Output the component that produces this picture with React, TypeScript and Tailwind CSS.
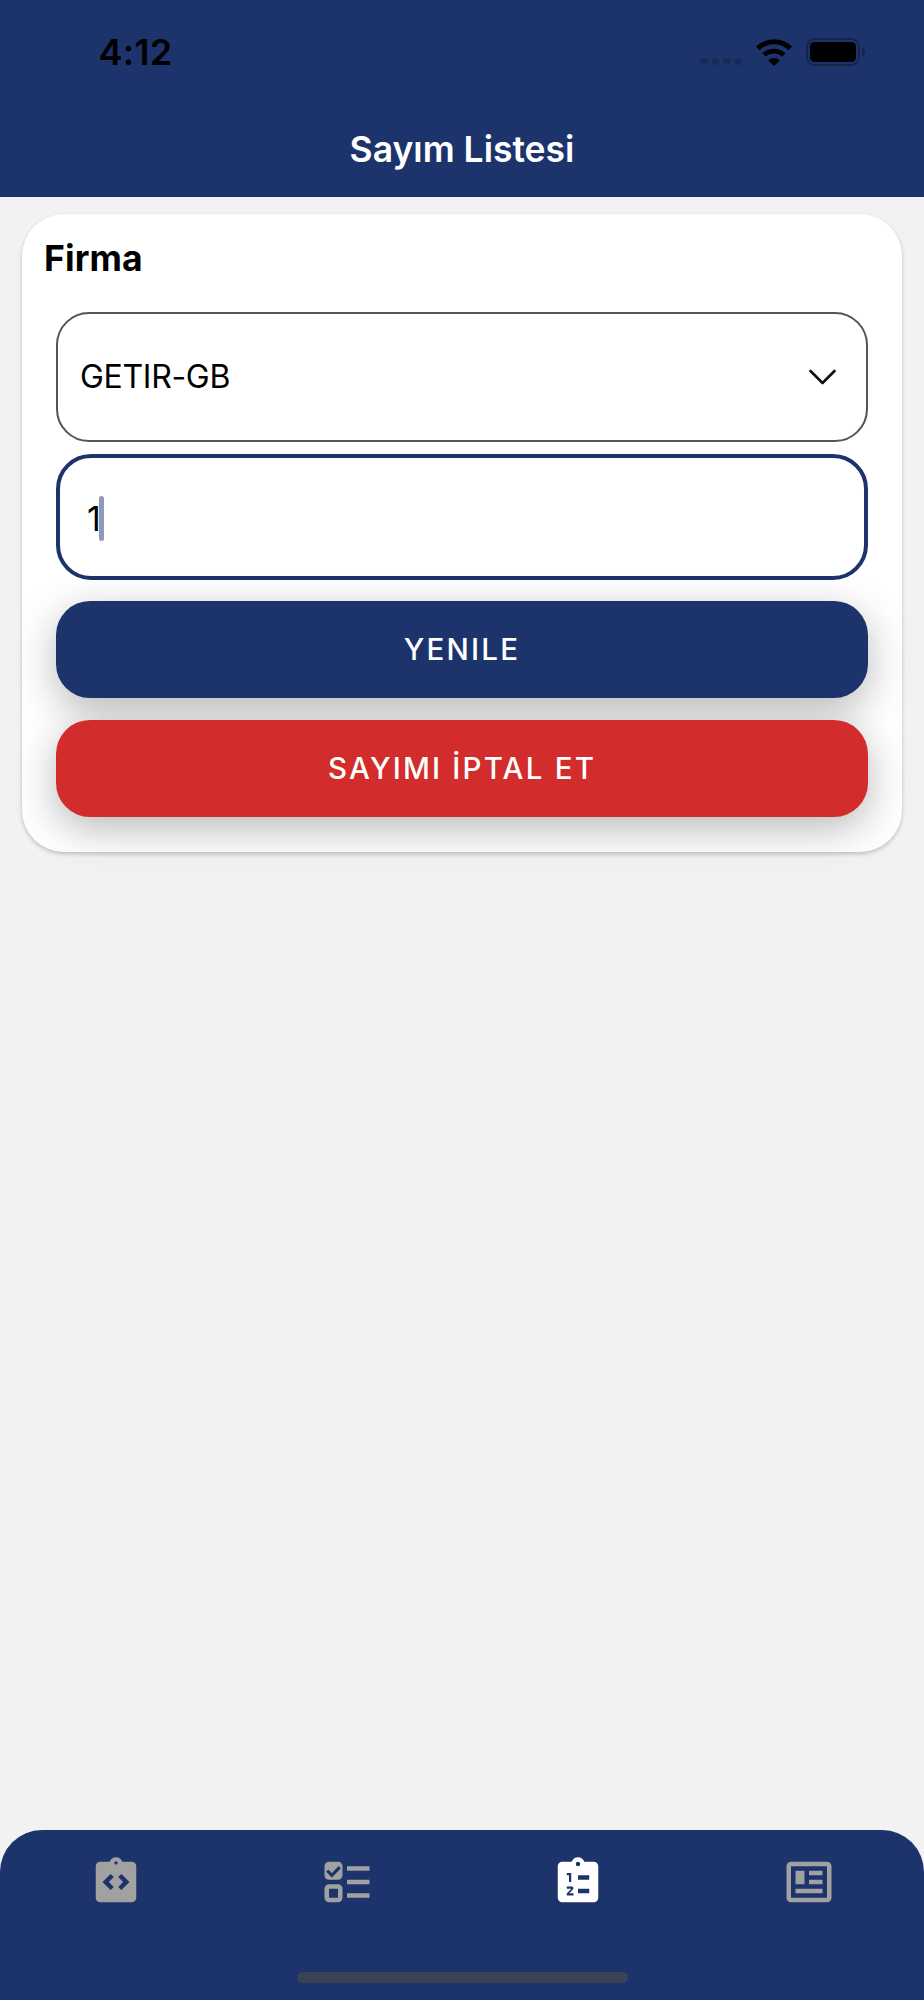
import type { ReactNode } from "react";

function StatusBar() {
  return (
    <div className="flex h-[104px] items-center justify-between pr-[59px] pl-[98.5px] text-black">
      <span className="text-[36px] leading-none font-semibold tracking-[0.2px]">4:12</span>
      <div className="flex items-center">
        <div className="mt-[19px] flex gap-[4px]">
          <span className="size-[7.5px] rounded-[3px] bg-[#172b57]" />
          <span className="size-[7.5px] rounded-[3px] bg-[#172b57]" />
          <span className="size-[7.5px] rounded-[3px] bg-[#172b57]" />
          <span className="size-[7.5px] rounded-[3px] bg-[#172b57]" />
        </div>
        <svg className="ml-[14px] h-[27px] w-[36px]" viewBox="0 0 36 27">
          <path d="M1.8 9.4a23.2 23.2 0 0 1 32.4 0" fill="none" stroke="currentColor" strokeWidth="5" />
          <path d="M8.2 16a14.2 14.2 0 0 1 19.6 0" fill="none" stroke="currentColor" strokeWidth="4.8" />
          <path d="M12.2 21.4a8.4 8.4 0 0 1 11.6 0L18 27z" fill="currentColor" />
        </svg>
        <svg className="ml-[14px] h-[28px] w-[59px]" viewBox="0 0 59 28">
          <rect x="1" y="1" width="52" height="26" rx="8" fill="none" stroke="#142547" strokeWidth="2" />
          <rect x="4" y="4" width="46" height="20" rx="4.5" fill="currentColor" />
          <path d="M56 9.5c4 2 4 7 0 9z" fill="#142547" />
        </svg>
      </div>
    </div>
  );
}

function TabIcon({ active, children }: { active?: boolean; children: ReactNode }) {
  return (
    <button className={`flex flex-1 justify-center ${active ? "text-white" : "text-[#a1a1a1]"}`}>
      <svg className="size-[54px]" viewBox="0 0 24 24" fill="currentColor" fillRule="evenodd">
        {children}
      </svg>
    </button>
  );
}

function TabBar() {
  return (
    <nav className="flex h-[170.5px] flex-col items-center justify-between rounded-t-[42px] bg-[#1c346b] pt-[25.5px] pb-[17px]">
      <div className="flex w-full">
        <TabIcon>
          <path d="M19 3h-4.18C14.4 1.84 13.3 1 12 1s-2.4.84-2.82 2H5a2 2 0 0 0-2 2v14a2 2 0 0 0 2 2h14a2 2 0 0 0 2-2V5a2 2 0 0 0-2-2zM12 2.75a.75.75 0 1 1 0 1.5.75.75 0 0 1 0-1.5zM11 14.17l-1.41 1.42L6 12l3.59-3.59L11 9.83 8.83 12zm3.41 1.42L13 14.17 15.17 12 13 9.83l1.41-1.42L18 12z" />
        </TabIcon>
        <TabIcon>
          <rect x="2" y="3" width="8" height="8" rx="2" />
          <path d="M3.2 6.9 5.3 9l3.5-3.6" fill="none" stroke="#1c346b" strokeWidth="1.4" />
          <path d="M4 13h4a2 2 0 0 1 2 2v4a2 2 0 0 1-2 2H4a2 2 0 0 1-2-2v-4a2 2 0 0 1 2-2zm0 2v4h4v-4z" />
          <path d="M12 5h10v2H12zM12 11h10v2H12zM12 17h10v2H12z" />
        </TabIcon>
        <TabIcon active>
          <path d="M19 3h-4.18C14.4 1.84 13.3 1 12 1s-2.4.84-2.82 2H5a2 2 0 0 0-2 2v14a2 2 0 0 0 2 2h14a2 2 0 0 0 2-2V5a2 2 0 0 0-2-2zM12 3a1 1 0 1 1 0 2 1 1 0 0 1 0-2zM7 8h2v4H8V9H7zM10 17v1H7v-.92L9 15H7v-1h2.25a.75.75 0 0 1 .54 1.27L8.12 17zM12 9h5v2h-5zM12 15h5v2h-5z" />
        </TabIcon>
        <TabIcon>
          <path d="M4 3h16a2 2 0 0 1 2 2v14a2 2 0 0 1-2 2H4a2 2 0 0 1-2-2V5a2 2 0 0 1 2-2zm0 2v14h16V5z" />
          <path d="M6 7h4v6H6zM12 7h6v2h-6zM12 11h6v2h-6zM6 15h12v2H6z" />
        </TabIcon>
      </div>
      <div className="h-[11px] w-[331px] rounded-full bg-[#3a4256]" />
    </nav>
  );
}

export default function App() {
  return (
    <div className="flex h-[2000px] w-[924px] flex-col bg-[#f2f2f2] font-['Inter','Liberation_Sans',sans-serif] text-black">
      <header className="h-[196.5px] bg-[#1c346b]">
        <StatusBar />
        <h1 className="text-center text-[35.5px] leading-[92px] font-semibold text-white">
          Sayım Listesi
        </h1>
      </header>

      <main className="flex-1 px-[22px] pt-[17.5px]">
        <section className="flex h-[638px] flex-col rounded-[42px] bg-white px-[34px] pt-[22.5px] shadow-[0_2px_4px_rgba(0,0,0,0.2)]">
          <h2 className="-ml-[12px] text-[35.5px] leading-[44px] font-bold tracking-[0.1px]">Firma</h2>

          <button className="mt-[31.5px] flex h-[129.5px] items-center justify-between rounded-[33px] border-2 border-[#555] pr-[30px] pl-[22px] text-left">
            <span className="text-[32px] leading-none tracking-[-0.3px]">GETIR-GB</span>
            <svg className="h-[16px] w-[27px]" viewBox="0 0 27 16" fill="none" stroke="#111" strokeWidth="2.6" strokeLinecap="round" strokeLinejoin="round">
              <path d="M1.5 2 13.5 14 25.5 2" />
            </svg>
          </button>

          <div className="mt-[12px] flex h-[126px] items-center rounded-[35px] border-4 border-[#1c346b] bg-white pt-[3px] pl-[27px]">
            <span className="mt-px text-[34px] leading-none">1</span>
            <span className="-ml-[1.5px] h-[45px] w-[4.5px] rounded-full bg-[#8e9ab8]" />
          </div>

          <button className="mt-[21.5px] h-[97px] rounded-[34px] bg-[#1c346b] text-[29.5px] font-[450] tracking-[2.2px] text-white shadow-[0_12px_42px_rgba(0,0,0,0.28)]">
            YENILE
          </button>
          <button className="mt-[22px] h-[97px] rounded-[34px] bg-[#d32c2c] text-[29.5px] font-[450] tracking-[2.2px] text-white shadow-[0_12px_42px_rgba(0,0,0,0.28)]">
            SAYIMI İPTAL ET
          </button>
        </section>
      </main>

      <TabBar />
    </div>
  );
}
